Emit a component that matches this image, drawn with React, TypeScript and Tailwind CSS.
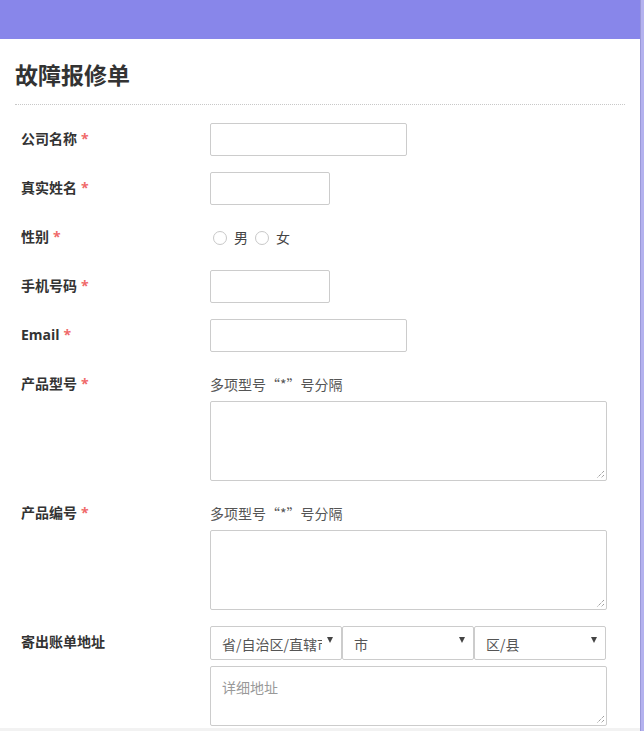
import React from 'react';

const font = { fontFamily: '"Open Sans", "Noto Sans CJK SC", sans-serif' };
const cjk = { fontFamily: '"Noto Sans CJK SC", sans-serif' };

function Label({ text, required = true }: { text: string; required?: boolean }) {
  return (
    <div className="w-[210px] shrink-0 pl-[21px] pt-[6px] text-[14px] leading-[20px] font-bold text-[#333]">
      {text}
      {required && <span className="ml-[4px] text-[#f06a6a]">*</span>}
    </div>
  );
}

function Box({ w }: { w: string }) {
  return <div className={`${w} h-[33px] rounded-[2px] border border-[#ccc] bg-white`} />;
}

function Area({ h = 'h-[80px]', placeholder }: { h?: string; placeholder?: string }) {
  return (
    <div className={`relative w-[397px] ${h} rounded-[2px] border border-[#ccc] bg-white px-[11px] pt-[11px] text-[14px] leading-[20px] text-[#999]`}>
      {placeholder}
      <svg className="absolute bottom-[1px] right-[1px]" width="9" height="9" viewBox="0 0 9 9">
        <path d="M8 1 L1 8 M8 5 L5 8" stroke="#777" strokeWidth="1" strokeDasharray="1 1" />
      </svg>
    </div>
  );
}

function Select({ text }: { text: string }) {
  return (
    <div className="flex h-[34px] w-[132px] items-center overflow-hidden rounded-[2px] border border-[#ccc] bg-white pl-[11px] pr-[8px] text-[14px] text-[#555]">
      <span className="min-w-0 flex-1 overflow-hidden whitespace-nowrap pt-[3px]" style={cjk}>{text}</span>
      <svg className="ml-[5px] shrink-0 self-start mt-[10px]" width="6" height="6" viewBox="0 0 6 6">
        <path d="M0 0 H6 L3 6 Z" fill="#444" />
      </svg>
    </div>
  );
}

function Radio({ label }: { label: string }) {
  return (
    <span className="flex items-center gap-[7px]">
      <span className="h-[14px] w-[14px] rounded-full border border-[#c8c8c8] bg-white" />
      <span>{label}</span>
    </span>
  );
}

export default function App() {
  return (
    <div className="flex min-h-[731px] w-[644px] bg-[#8886ea]" style={font}>
      <div className="w-[640px]">
        <div className="h-[39px] bg-[#8886ea]" />
        <div className="bg-white pb-[2px]">
          <h1 className="pl-[15px] pt-[20px] text-[23px] font-bold leading-[32px] text-[#333]">故障报修单</h1>
          <div className="mx-[15px] mt-[13px] border-b border-dotted border-[#c8c8c8]" />
          <div className="pt-[18px]">
            <div className="mb-[16px] flex">
              <Label text="公司名称" />
              <Box w="w-[197px]" />
            </div>
            <div className="mb-[16px] flex">
              <Label text="真实姓名" />
              <Box w="w-[120px]" />
            </div>
            <div className="mb-[16px] flex">
              <Label text="性别" />
              <div className="flex h-[33px] items-center gap-[7px] pl-[3px] text-[14px] text-[#444]">
                <Radio label="男" />
                <Radio label="女" />
              </div>
            </div>
            <div className="mb-[16px] flex">
              <Label text="手机号码" />
              <Box w="w-[120px]" />
            </div>
            <div className="mb-[16px] flex">
              <Label text="Email" />
              <Box w="w-[197px]" />
            </div>
            <div className="mb-[16px] flex">
              <Label text="产品型号" />
              <div>
                <div className="pt-[6px] text-[14px] leading-[20px] text-[#555]" style={cjk}>多项型号“*”号分隔</div>
                <div className="mt-[7px]">
                  <Area />
                </div>
              </div>
            </div>
            <div className="mb-[16px] flex">
              <Label text="产品编号" />
              <div>
                <div className="pt-[6px] text-[14px] leading-[20px] text-[#555]" style={cjk}>多项型号“*”号分隔</div>
                <div className="mt-[7px]">
                  <Area />
                </div>
              </div>
            </div>
            <div className="flex">
              <Label text="寄出账单地址" required={false} />
              <div>
                <div className="flex">
                  <Select text="省/自治区/直辖市" />
                  <Select text="市" />
                  <Select text="区/县" />
                </div>
                <div className="mt-[6px]">
                  <Area h="h-[60px]" placeholder="详细地址" />
                </div>
              </div>
            </div>
          </div>
        </div>
        <div className="h-[4px] bg-[#f2f2f2]" />
      </div>
      <div className="w-[4px] border-l border-[#9a98d8] bg-[#b4b2ef]" />
    </div>
  );
}
